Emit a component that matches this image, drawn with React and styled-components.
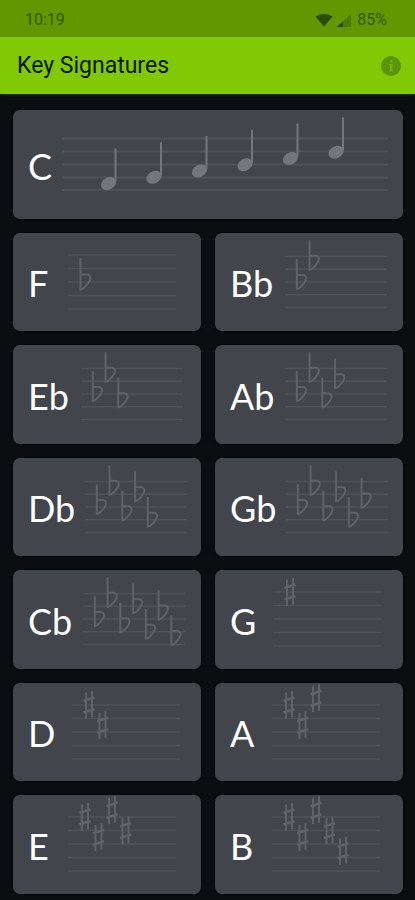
import React from 'react';
import styled, { createGlobalStyle } from 'styled-components';

const GlobalStyle = createGlobalStyle`
    * {
        box-sizing: border-box;
    }
    body {
        margin: 0;
        background-color: #0b0d10;
        font-family: Roboto, "Liberation Sans", sans-serif;
    }
`;

const Page = styled.div`
    display: flex;
    flex-direction: column;
    min-height: 100vh;
    background-color: #0b0d10;
`;

const StatusBar = styled.div`
    display: flex;
    justify-content: space-between;
    align-items: center;
    height: 37px;
    padding: 2px 28px 0 25px;
    background-color: #629700;
    color: #355900;
    font-size: 16px;
    line-height: 20px;
`;

const StatusIcons = styled.div`
    display: flex;
    align-items: center;
    gap: 4px;
    & > span {
        margin-left: 2px;
    }
`;

const AppBar = styled.header`
    display: flex;
    justify-content: space-between;
    align-items: center;
    height: 57px;
    padding: 0 14px 0 17px;
    background-color: #80c904;
    box-shadow: 0 1px 2px #2b3a16;
`;

const Title = styled.h1`
    margin: 0;
    color: #0d1700;
    font-size: 23px;
    line-height: 26px;
    font-weight: 400;
`;

const InfoButton = styled.button`
    display: flex;
    padding: 0;
    border: none;
    background: none;
    cursor: pointer;
`;

const KeyGrid = styled.main`
    display: grid;
    grid-template-columns: 1fr 1fr;
    grid-template-rows: 109px;
    grid-auto-rows: 98px 99px;
    gap: 14px;
    padding: 16px 12px 6px 13px;
`;

const KeyCard = styled.button`
    display: flex;
    align-items: center;
    grid-column: ${props=>props.$wide ? "1 / -1" : "auto"};
    min-width: 0;
    padding: 0 5px 1px 15px;
    border: none;
    border-radius: 7px;
    background-color: #42454b;
    box-shadow: 0 0 3px #000000;
    overflow: hidden;
    cursor: pointer;
`;

const KeyName = styled.span`
    padding-top: 3px;
    color: #ffffff;
    font-family: Lato, "Open Sans", sans-serif;
    font-size: 36px;
    line-height: 42px;
`;

const StaffArea = styled.span`
    display: flex;
    flex: 1;
    justify-content: center;
    min-width: 0;
`;

const StaffDrawing = styled.svg`
    width: ${props=>props.$width};
    max-width: 100%;
    height: ${props=>props.$height};
    overflow: visible;
    fill: none;
`;

const LINE = "#4f5258";
const SIGN = "#5f6268";
const NOTE = "#73767d";

// steps down from the first sign, half a staff space each
const FLAT_STEPS = [0, -3, 1, -2, 2, -1, 3];
const SHARP_STEPS = [0, 3, -1, 2, 5];

const KEYS = [
    { name: "F", flats: 1 },
    { name: "Bb", flats: 2 },
    { name: "Eb", flats: 3 },
    { name: "Ab", flats: 4 },
    { name: "Db", flats: 5 },
    { name: "Gb", flats: 6 },
    { name: "Cb", flats: 7 },
    { name: "G", sharps: 1 },
    { name: "D", sharps: 2 },
    { name: "A", sharps: 3 },
    { name: "E", sharps: 4 },
    { name: "B", sharps: 5 },
];

const Flat = ({ x, y }) => {
    return <path
        transform={`translate(${x} ${y})`}
        d="M0 -24V7.500L2.500 6.500C6 3.500 9.500 0 9.800 -4C9.500 -7.500 8 -7.500 6 -7.500H0"
        stroke={SIGN}
        strokeWidth="2.100"
        strokeLinejoin="round"
    />
}

const Sharp = ({ x, y }) => {
    return <g transform={`translate(${x} ${y})`} stroke={SIGN}>
        <path d="M-3 -12.500V14M3 -14V12.500" strokeWidth="2" />
        <path d="M-5.500 -4L5.500 -7.500M-5.500 7.500L5.500 4" strokeWidth="2.800" />
    </g>
}

const SignatureStaff = ({ flats = 0, sharps = 0, width }) => {
    return <StaffDrawing $width={width} $height="98px" viewBox="0 0 108 98" aria-hidden="true">
        <path d="M0 22H108M0 35.500H108M0 49H108M0 62.500H108M0 76H108" stroke={LINE} strokeWidth="1.600" />
        {FLAT_STEPS.slice(0, flats).map((step, i) => (
            <Flat key={i} x={12.5 + i * 13.5} y={49 + step * 6.75} />
        ))}
        {SHARP_STEPS.slice(0, sharps).map((step, i) => (
            <Sharp key={i} x={17 + i * 13.5} y={22 + step * 6.75} />
        ))}
    </StaffDrawing>
}

const ScaleStaff = () => {
    return <StaffDrawing $width="326px" $height="108px" viewBox="0 0 326 108" aria-hidden="true">
        <path d="M0 28.500H326M0 41.500H326M0 54.500H326M0 67.500H326M0 80H326" stroke={LINE} strokeWidth="1.800" />
        {[0, 1, 2, 3, 4, 5].map(i => (
            <g key={i} transform={`translate(${46.5 + i * 45.5} ${73.5 - i * 6.25})`}>
                <ellipse rx="8" ry="6" transform="rotate(-28)" fill={NOTE} />
                <path d="M7 -2V-35" stroke={NOTE} strokeWidth="2" />
            </g>
        ))}
    </StaffDrawing>
}

const App = () => {
    return <Page>
        <GlobalStyle />
        <StatusBar>
            <span>10:19</span>
            <StatusIcons>
                <svg width="18" height="14" viewBox="0 0 18 14" aria-hidden="true">
                    <path d="M0.500 3.500C5 0 13 0 17.500 3.500L9 13.500Z" fill="#2c4a00" />
                </svg>
                <svg width="14" height="14" viewBox="0 0 14 14" aria-hidden="true">
                    <path d="M0 14L14 1V14Z" fill="#4c7b00" />
                    <path d="M0 14L6 8.500V14Z" fill="#2c4a00" />
                </svg>
                <span>85%</span>
            </StatusIcons>
        </StatusBar>
        <AppBar>
            <Title>Key Signatures</Title>
            <InfoButton aria-label="Info">
                <svg width="20" height="20" viewBox="0 0 20 20" aria-hidden="true">
                    <circle cx="10" cy="10" r="10" fill="#5b930a" />
                    <path d="M9 4H11.500V6.500H9ZM8 8H11.500V14.500H12.500V15.500H8V14.500H9V9H8Z" fill="#72b20a" />
                </svg>
            </InfoButton>
        </AppBar>
        <KeyGrid>
            <KeyCard $wide>
                <KeyName>C</KeyName>
                <StaffArea><ScaleStaff /></StaffArea>
            </KeyCard>
            {KEYS.map(({ name, flats, sharps }) => (
                <KeyCard key={name}>
                    <KeyName>{name}</KeyName>
                    <StaffArea>
                        <SignatureStaff flats={flats} sharps={sharps} width={name.length > 1 ? "102px" : "108px"} />
                    </StaffArea>
                </KeyCard>
            ))}
        </KeyGrid>
    </Page>
}

export default App;
